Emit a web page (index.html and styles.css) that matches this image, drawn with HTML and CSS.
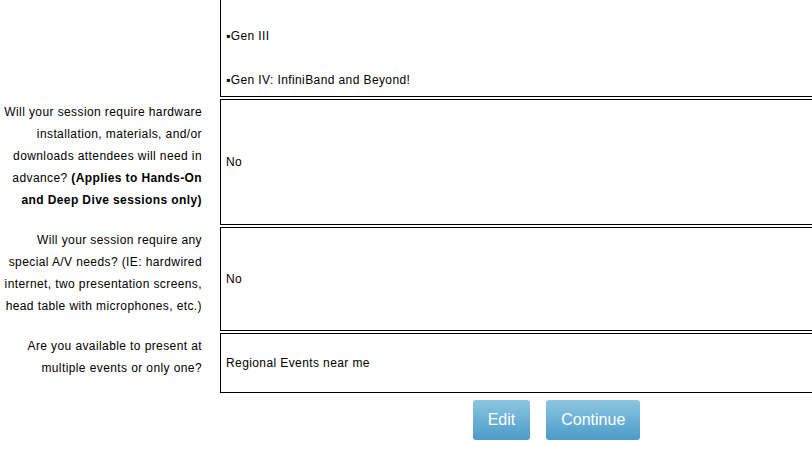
FILE: index.html
```html
<!DOCTYPE html>
<html lang="en">
<head>
<meta charset="utf-8">
<title>Session Review</title>
<link rel="stylesheet" href="styles.css">
</head>
<body>
<div class="review">
  <div class="label"></div>
  <div class="answer answer-list">
    <div class="item">&#9642;Gen III</div>
    <div class="item">&#9642;Gen IV: InfiniBand and Beyond!</div>
  </div>

  <div class="label">Will your session require hardware installation, materials, and/or downloads attendees will need in advance? <b>(Applies to Hands-On and Deep Dive sessions only)</b></div>
  <div class="answer">No</div>

  <div class="label">Will your session require any special A/V needs? (IE: hardwired internet, two presentation screens, head table with microphones, etc.)</div>
  <div class="answer">No</div>

  <div class="label">Are you available to present at multiple events or only one?</div>
  <div class="answer">Regional Events near me</div>

  <div class="spacer"></div>
  <div class="actions">
    <button class="btn" type="button">Edit</button>
    <button class="btn" type="button">Continue</button>
  </div>
</div>
</body>
</html>
```
FILE: styles.css
```css
html, body {
  margin: 0;
  padding: 0;
  background: #ffffff;
  overflow: hidden;
}

body {
  font-family: "Liberation Sans", Arial, sans-serif;
  font-size: 12px;
  color: #000000;
  letter-spacing: 0.4px;
}

.review {
  display: grid;
  grid-template-columns: 218px 671px;
  column-gap: 2px;
  row-gap: 2px;
  margin-top: -1px;
}

.label {
  text-align: right;
  line-height: 22px;
  padding: 2px 16px 14px 2px;
}

.answer {
  border: 1px solid #000000;
  padding: 0 5px;
  display: flex;
  align-items: center;
  line-height: 22px;
}

.answer-list {
  flex-direction: column;
  align-items: flex-start;
  justify-content: flex-start;
  gap: 21.5px;
  padding: 25px 5px 5.5px;
}

.actions {
  display: flex;
  justify-content: center;
  gap: 16px;
  padding: 5px 0 0 2px;
}

.btn {
  height: 40px;
  padding: 0 15px;
  border: none;
  border-radius: 3px;
  background: linear-gradient(#8cc6e0, #4b9bc8);
  color: #ffffff;
  font-family: "Liberation Sans", Arial, sans-serif;
  font-size: 16px;
  letter-spacing: 0;
  cursor: pointer;
}
```
